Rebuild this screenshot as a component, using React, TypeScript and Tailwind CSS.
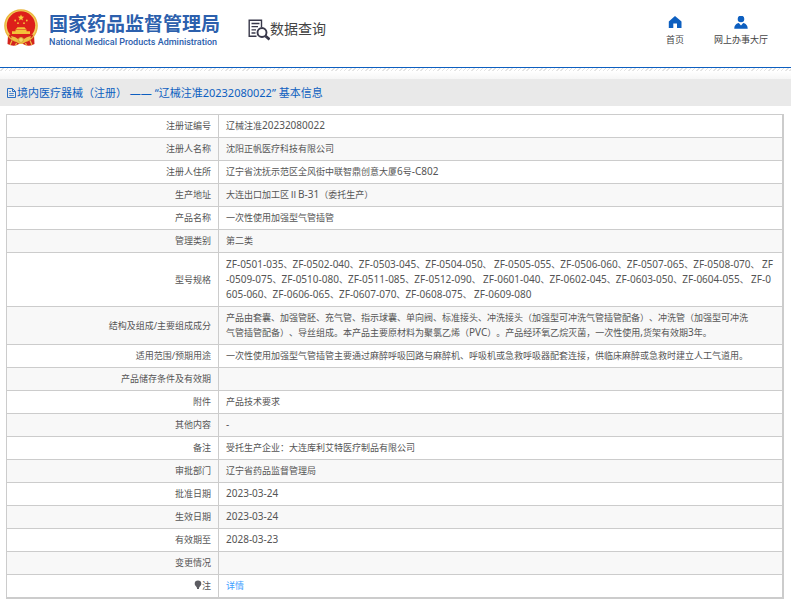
import type { ReactNode } from "react";

const SANS = "font-['Noto_Sans','Noto_Sans_CJK_SC',sans-serif]";

type Row = {
  label: string;
  lines: string[];
  tall?: boolean;
  pin?: boolean;
  link?: boolean;
};

const rows: Row[] = [
  { label: "注册证编号", lines: ["辽械注准20232080022"] },
  { label: "注册人名称", lines: ["沈阳正帆医疗科技有限公司"] },
  { label: "注册人住所", lines: ["辽宁省沈抚示范区全风街中联智鼎创意大厦6号-C802"] },
  { label: "生产地址", lines: ["大连出口加工区ⅡB-31（委托生产）"] },
  { label: "产品名称", lines: ["一次性使用加强型气管插管"] },
  { label: "管理类别", lines: ["第二类"] },
  {
    label: "型号规格",
    tall: true,
    lines: [
      "ZF-0501-035、ZF-0502-040、ZF-0503-045、ZF-0504-050、 ZF-0505-055、ZF-0506-060、ZF-0507-065、ZF-0508-070、 ZF",
      "-0509-075、ZF-0510-080、ZF-0511-085、ZF-0512-090、 ZF-0601-040、ZF-0602-045、ZF-0603-050、ZF-0604-055、 ZF-0",
      "605-060、ZF-0606-065、ZF-0607-070、ZF-0608-075、 ZF-0609-080",
    ],
  },
  {
    label: "结构及组成/主要组成成分",
    lines: [
      "产品由套囊、加强管胚、充气管、指示球囊、单向阀、标准接头、冲洗接头（加强型可冲洗气管插管配备）、冲洗管（加强型可冲洗",
      "气管插管配备）、导丝组成。本产品主要原材料为聚氯乙烯（PVC）。产品经环氧乙烷灭菌，一次性使用,货架有效期3年。",
    ],
  },
  {
    label: "适用范围/预期用途",
    lines: [
      "一次性使用加强型气管插管主要通过麻醉呼吸回路与麻醉机、呼吸机或急救呼吸器配套连接，供临床麻醉或急救时建立人工气道用。",
    ],
  },
  { label: "产品储存条件及有效期", lines: [""] },
  { label: "附件", lines: ["产品技术要求"] },
  { label: "其他内容", lines: ["-"] },
  { label: "备注", lines: ["受托生产企业：大连库利艾特医疗制品有限公司"] },
  { label: "审批部门", lines: ["辽宁省药品监督管理局"] },
  { label: "批准日期", lines: ["2023-03-24"] },
  { label: "生效日期", lines: ["2023-03-24"] },
  { label: "有效期至", lines: ["2028-03-23"] },
  { label: "变更情况", lines: [""] },
  { label: "注", lines: ["详情"], pin: true, link: true },
];

/* Latin letters and digits are set one size larger than the Chinese text. */
function mixed(text: string): ReactNode[] {
  return text.split(/([A-Za-z0-9,\-]+)/).map((part, i) =>
    i % 2 === 1 ? (
      <span key={i} className="text-[10px]">
        {part}
      </span>
    ) : (
      part
    ),
  );
}

function Emblem() {
  return (
    <svg viewBox="0 0 36 38" className="h-[38px] w-[36px] shrink-0" aria-hidden="true">
      <path d="M5 26 L4.500 35 Q10 38 14 36 L18 34 L22 36 Q27 38 31.500 35 L31 26 Z" fill="#d3231d" />
      <circle cx="18" cy="17" r="16.800" fill="#e9b53c" />
      <circle cx="18" cy="17" r="15.600" fill="#f3cf5f" />
      <circle cx="18" cy="16.500" r="14.200" fill="#dd1f1a" />
      <path d="M18 5.500 l.9 2 2.200.2-1.700 1.500.5 2.200-1.900-1.200-1.900 1.200.5-2.200-1.700-1.500 2.200-.2z" fill="#f6cf3e" />
      <g fill="#f3c23a">
        <circle cx="12.200" cy="11.500" r=".9" />
        <circle cx="23.800" cy="11.500" r=".9" />
        <circle cx="15" cy="14.200" r=".9" />
        <circle cx="21" cy="14.200" r=".9" />
        <path d="M13 20 L14.500 18.300 H21.500 L23 20 Z" />
        <path d="M12.500 20.500 H23.500 V22.300 H27 V25 H9 V22.300 H12.500 Z" />
      </g>
      <path d="M5.500 25.500 Q18 28 30.500 25.500 L29 28.500 Q18 32 7 28.500 Z" fill="#d3231d" />
      <path d="M8 27 Q13 28 15 30 Q18 26.500 21 30 Q23 28 28 27 L27 29.500 Q23 31 21.500 33.500 Q18 36.500 14.500 33.500 Q13 31 9 29.500 Z" fill="#eebf45" />
      <circle cx="18" cy="31" r="2.400" fill="#f6d968" stroke="#c98d22" strokeWidth=".6" />
      <path d="M9 31.500 L7 36 M27 31.500 L29 36 M13.500 34 L12.500 36.500 M22.500 34 L23.500 36.500" stroke="#eebf45" strokeWidth="1.200" />
    </svg>
  );
}

function QueryIcon() {
  return (
    <svg viewBox="0 0 22 22" className="h-[22px] w-[22px] shrink-0" fill="none" stroke="#38384a" aria-hidden="true">
      <path d="M8.500 17.200 H1.200 V1.200 H13.500 V8" strokeWidth="1.400" />
      <path d="M3.500 4.500 H11.500 M3.500 7.700 H10 M3.500 10.800 H8 M3.500 14 H7.500" strokeWidth="1.300" />
      <circle cx="14" cy="13.500" r="4.500" strokeWidth="1.900" />
      <path d="M17.500 17 L21.500 20.500" strokeWidth="2.800" />
    </svg>
  );
}

function PageIcon() {
  return (
    <svg viewBox="0 0 9 10" className="h-[10px] w-[9px] shrink-0" fill="none" stroke="#2a6fc4" aria-hidden="true">
      <path d="M.5.5 H5.500 L8.500 3.500 V9.500 H.5 Z M5.500.5 V3.500 H8.500" />
      <path d="M2.200 3.500 H4 M2.200 5.500 H6.800 M2.200 7.500 H6.800" strokeWidth=".8" />
    </svg>
  );
}

function PinIcon() {
  return (
    <svg viewBox="0 0 8 10" className="inline-block h-[10px] w-[8px] align-[-1px]" fill="#5c5c62" aria-hidden="true">
      <path d="M4 .5 A3.300 3.300 0 0 1 7.300 3.800 C7.300 5.600 5.800 6 5.300 7.400 H2.700 C2.200 6 .7 5.600 .7 3.800 A3.300 3.300 0 0 1 4 .5Z M3 7 H5 V9 H3Z" />
    </svg>
  );
}

export default function App() {
  return (
    <div className={`min-h-screen bg-white text-[#555] [text-spacing-trim:space-all] ${SANS}`}>
      <header className="flex h-[67px] items-start justify-between pr-[23px] pl-[3px]">
        <div className="flex items-start">
          <a href="#" className="flex items-start gap-[10px] pt-[9px] text-[#2c60ad]">
            <Emblem />
            <span className="flex flex-col pt-[3px]">
              <span className="text-[19px] leading-[24px] font-bold whitespace-nowrap">国家药品监督管理局</span>
              <span className="font-['Roboto','Noto_Sans',sans-serif] text-[9px] leading-[12px] font-medium whitespace-nowrap">
                National Medical Products Administration
              </span>
            </span>
          </a>
          <h1 className="flex items-start pt-[19px] pl-[28px] text-[#444]">
            <QueryIcon />
            <span className="text-[14px] leading-[20px] whitespace-nowrap">数据查询</span>
          </h1>
        </div>
        <nav className="flex gap-[30px] pt-[16px] text-[9px] leading-[14px] text-[#444]">
          <a href="#" className="flex flex-col items-center gap-[4px]">
            <svg viewBox="0 0 14 13" className="h-[13px] w-[14px]" fill="#0d5fc0" aria-hidden="true">
              <path d="M7 0 L13.500 5.500 V12 H9 V7.500 H5.300 V12 H.8 V5.500 Z" />
            </svg>
            首页
          </a>
          <a href="#" className="flex flex-col items-center gap-[4px]">
            <svg viewBox="0 0 14 13" className="h-[13px] w-[14px]" fill="#0d5fc0" aria-hidden="true">
              <circle cx="7" cy="3" r="3.300" />
              <path d="M.3 12.800 C.3 9 2.500 7.500 4.800 7 L7 9.500 L9.200 7 C11.500 7.500 13.700 9 13.700 12.800 Z" />
            </svg>
            网上办事大厅
          </a>
        </nav>
      </header>
      <div className="h-px bg-[#0d5fc0]" />
      <div className="h-[3px] bg-[repeating-linear-gradient(135deg,#fff_0_2px,#e4e4e4_2px_3px)]" />
      <div className="h-[8px] bg-linear-to-b from-white to-[#f6f6f6]" />
      <h2 className="flex h-[27px] items-center gap-px bg-[#e9e9e9] pl-[7px] text-[11px] leading-[16px] text-[#0d5fc0]">
        <PageIcon />
        <span className="whitespace-pre">境内医疗器械（注册） —— “辽械注准20232080022” 基本信息</span>
      </h2>
      <main className="pt-[8px] pr-[7px] pb-[8px] pl-[6px]">
        <table className="w-full border-collapse border border-r-2 border-b-2 border-[#ccc] text-[9px] leading-[15px]">
          <tbody>
            {rows.map((row) => (
              <tr key={row.label} className={`even:bg-[#f8f8f8] ${row.tall ? "h-[54px]" : "h-[23px]"}`}>
                <th scope="row" className="w-[212px] border border-[#ccc] pt-[3px] pr-[7px] pb-[4px] text-right font-normal">
                  {row.pin && <PinIcon />}
                  {row.label}
                </th>
                <td className="border border-[#ccc] pt-[3px] pb-[4px] pl-[7px]">
                  {row.lines.map((line) => (
                    <div key={line} className="whitespace-pre">
                      {row.link ? (
                        <a href="#" className="text-[#409eff]">
                          {line}
                        </a>
                      ) : (
                        mixed(line)
                      )}
                    </div>
                  ))}
                </td>
              </tr>
            ))}
          </tbody>
        </table>
      </main>
    </div>
  );
}
